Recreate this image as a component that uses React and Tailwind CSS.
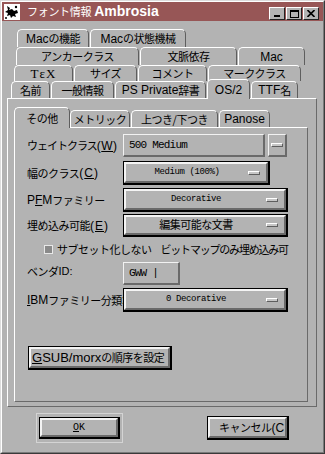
import React from "react";

const J = ({ children, className = "" }) => (
  <span className={"font-['Noto_Sans_CJK_JP',sans-serif] text-[11px] tracking-[-0.5px] " + className}>{children}</span>
);

const Tab = ({ className = "", children }) => (
  <div className={"flex items-center justify-center rounded-t-[5px] border-t border-l border-r border-t-white border-l-white border-r-[#5e5e5e] bg-[#b3b3b3] whitespace-nowrap overflow-hidden " + className}>
    {children}
  </div>
);

const Bar = () => (
  <div className="w-[12px] h-[4px] border border-t-white border-l-white border-r-[#5e5e5e] border-b-[#5e5e5e] bg-[#c6c6c6]" />
);

const Raised = ({ className = "", children }) => (
  <div className={"border-t border-l border-t-[#f2f2f2] border-l-[#f2f2f2] border-r-2 border-b-2 border-r-[#6a6a6a] border-b-[#6a6a6a] " + className}>{children}</div>
);

const BlackBox = ({ className = "", inner = "", children }) => (
  <div className={"border border-black border-r-2 border-b-2 " + className}>
    <div className={"h-full border-t-2 border-l-2 border-t-[#f4f4f4] border-l-[#f4f4f4] border-r-2 border-b-2 border-r-[#6a6a6a] border-b-[#6a6a6a] " + inner}>
      {children}
    </div>
  </div>
);

const Drop = ({ className = "", text }) => (
  <BlackBox className={className} inner="flex items-center">
    <div className="flex-1 text-center font-['Liberation_Mono',monospace] text-[9px] tracking-[-0.4px]">{text}</div>
    <div className="mr-[6px]"><Bar /></div>
  </BlackBox>
);

const Label = ({ children, className = "" }) => (
  <div className={"w-[96px] shrink-0 flex items-center whitespace-nowrap " + className}>{children}</div>
);

export default function App() {
  return (
    <div className="w-[325px] h-[454px] bg-[#b3b3b3] border border-t-[#dcdcdc] border-l-[#dcdcdc] border-r-[#3a3a3a] border-b-[#3a3a3a] font-['Liberation_Sans','Noto_Sans_CJK_JP',sans-serif] text-[12px] text-black overflow-hidden">
      <div className="h-full border border-t-white border-l-white border-r-[#7a7a7a] border-b-[#7a7a7a] flex flex-col">
        {/* Title bar */}
        <div className="h-[19px] shrink-0 bg-[#975656] flex items-center">
          <svg width="16" height="16" viewBox="0 0 16 16" className="ml-[2px]">
            <rect width="16" height="16" fill="#fff" />
            <path d="M3 2 L6 4 L5 6 L8 5 L10 7 L13 6 L14 9 L11 10 L12 13 L9 12 L7 14 L6 11 L3 12 L4 9 L1 8 L4 6 Z" fill="#000" />
            <circle cx="12" cy="3" r="1.2" fill="#000" />
            <circle cx="2" cy="14" r="1" fill="#000" />
          </svg>
          <div className="ml-[7px] text-white flex items-baseline whitespace-nowrap">
            <span className="font-['Noto_Sans_CJK_JP',sans-serif] text-[11px] tracking-[-0.3px]">フォント情報</span>
            <span className="ml-[3px] font-bold text-[14px]">Ambrosia</span>
          </div>
          <div className="ml-auto mr-[4px] self-end mb-[1px] flex gap-[1px]">
            <div className="w-[16px] h-[13px] bg-[#b3b3b3] border border-t-white border-l-white border-r-[#222] border-b-[#222] flex items-end justify-center pb-[2px]">
              <div className="w-[6px] h-[2px] bg-black" />
            </div>
            <div className="w-[16px] h-[13px] bg-[#b3b3b3] border border-t-white border-l-white border-r-[#222] border-b-[#222] flex items-center justify-center">
              <div className="w-[9px] h-[8px] border border-black border-t-2" />
            </div>
            <div className="w-[16px] h-[13px] bg-[#b3b3b3] border border-t-white border-l-white border-r-[#222] border-b-[#222] flex items-center justify-center">
              <svg width="8" height="7" viewBox="0 0 8 7"><path d="M0.5 0 L7.5 7 M7.5 0 L0.5 7" stroke="#000" strokeWidth="1.6" /></svg>
            </div>
          </div>
        </div>

        {/* Outer tab rows */}
        <div className="mt-[8px] flex h-[18px] ml-[15px] gap-[1px]">
          <Tab className="w-[72px]">Mac<J>の機能</J></Tab>
          <Tab className="w-[96px]">Mac<J>の状態機械</J></Tab>
        </div>
        <div className="flex h-[18px] ml-[14px] gap-[1px]">
          <Tab className="w-[123px]"><J>アンカークラス</J></Tab>
          <Tab className="w-[97px]"><J>文脈依存</J></Tab>
          <Tab className="w-[67px]">Mac</Tab>
        </div>
        <div className="flex h-[16px] ml-[12px] gap-[1px]">
          <Tab className="w-[59px]"><span className="font-['Liberation_Serif',serif] text-[13px] tracking-[1px]">TεX</span></Tab>
          <Tab className="w-[63px]"><J>サイズ</J></Tab>
          <Tab className="w-[69px]"><J>コメント</J></Tab>
          <Tab className="w-[93px]"><J>マーククラス</J></Tab>
        </div>
        <div className="flex h-[17px] ml-[9px] gap-[1px] relative z-10">
          <Tab className="w-[39px]"><J>名前</J></Tab>
          <Tab className="w-[63px]"><J>一般情報</J></Tab>
          <Tab className="w-[91px]">PS Private<J>辞書</J></Tab>
          <Tab className="w-[43px] h-[20px] -mt-[2px] self-start">OS/2</Tab>
          <Tab className="w-[47px]">TTF<J>名</J></Tab>
        </div>

        {/* Outer pane */}
        <div className="ml-[5px] w-[310px] h-[309px] shrink-0 border border-t-white border-l-white border-r-[#6a6a6a] border-b-[#6a6a6a] pl-[6px] flex flex-col">
          <div className="mt-[11px] flex h-[17px] relative z-10">
            <Tab className="w-[56px] h-[21px] -mt-[3px] self-start"><J>その他</J></Tab>
            <Tab className="w-[60px]"><J>メトリック</J></Tab>
            <Tab className="w-[87px] ml-[1px]"><J>上つき/下つき</J></Tab>
            <Tab className="w-[51px] ml-[1px]">Panose</Tab>
          </div>
          {/* Inner pane */}
          <div className="w-[294px] h-[275px] border border-t-white border-l-white border-r-[#6a6a6a] border-b-[#6a6a6a] pl-[12px] flex flex-col">
            <div className="mt-[6px] flex h-[23px]">
              <Label><J className="tracking-[-1px]">ウェイトクラス</J><span className="tracking-[0.5px]">(<u>W</u>)</span></Label>
              <Raised className="w-[142px] h-[23px] flex items-center pl-[5px] font-['Liberation_Mono',monospace] text-[11px] tracking-[-0.8px]">500 Medium</Raised>
              <Raised className="ml-[3px] w-[19px] h-[23px] flex items-center justify-center"><Bar /></Raised>
            </div>
            <div className="mt-[4px] flex h-[24px]">
              <Label><J>幅のクラス</J><span className="tracking-[1px]">(<u>C</u>)</span></Label>
              <Drop className="w-[147px] h-[24px]" text="Medium (100%)" />
            </div>
            <div className="mt-[3px] flex h-[24px]">
              <Label>P<u>F</u>M<J>ファミリー</J></Label>
              <Drop className="w-[165px] h-[24px]" text="Decorative" />
            </div>
            <div className="mt-[2px] flex h-[23px]">
              <Label><J>埋め込み可能</J><span className="tracking-[1px]">(<u>E</u>)</span></Label>
              <BlackBox className="w-[165px] h-[23px]" inner="flex items-center">
                <div className="flex-1 text-center"><J>編集可能な文書</J></div>
                <div className="mr-[6px]"><Bar /></div>
              </BlackBox>
            </div>
            <div className="mt-[4px] h-[16px] flex items-center pl-[17px] whitespace-nowrap">
              <div className="w-[9px] h-[9px] border border-[#e8e8e8] bg-[#8a8a8a]" />
              <J className="ml-[4px]">サブセット化しない</J>
              <J className="ml-[9px] tracking-[-1.2px]">ビットマップのみ埋め込み可</J>
            </div>
            <div className="mt-[5px] flex h-[23px]">
              <Label className="items-start pt-[1px]"><J>ベンダ</J><span className="text-[11px]">ID:</span></Label>
              <Raised className="w-[57px] h-[23px] flex items-center pl-[5px] font-['Liberation_Mono',monospace] text-[11px] tracking-[-0.8px]">GWW |</Raised>
            </div>
            <div className="mt-[3px] flex h-[24px]">
              <Label><u>I</u>BM<J>ファミリー分類</J>:</Label>
              <Drop className="w-[165px] h-[24px]" text="0 Decorative" />
            </div>
            <BlackBox className="mt-[34px] ml-[1px] w-[144px] h-[24px]" inner="flex items-center pl-[1px] whitespace-nowrap">
              <span className="text-[13px]"><u>G</u>SUB/morx</span><J>の順序を設定</J>
            </BlackBox>
          </div>
        </div>

        {/* Bottom buttons */}
        <div className="flex items-start">
          <div className="mt-[6px] ml-[34px] w-[87px] h-[30px] border border-[#d4d4d4] px-[2px] py-[3px]">
            <BlackBox className="w-[81px] h-[22px]" inner="flex items-center justify-center font-['Liberation_Mono',monospace] text-[10px]">
              <span><u>O</u>K</span>
            </BlackBox>
          </div>
          <BlackBox className="mt-[9px] ml-[84px] w-[82px] h-[24px]" inner="flex items-center pl-[9px] whitespace-nowrap overflow-hidden">
            <J>キャンセル</J><span>(C</span>
          </BlackBox>
        </div>
      </div>
    </div>
  );
}
